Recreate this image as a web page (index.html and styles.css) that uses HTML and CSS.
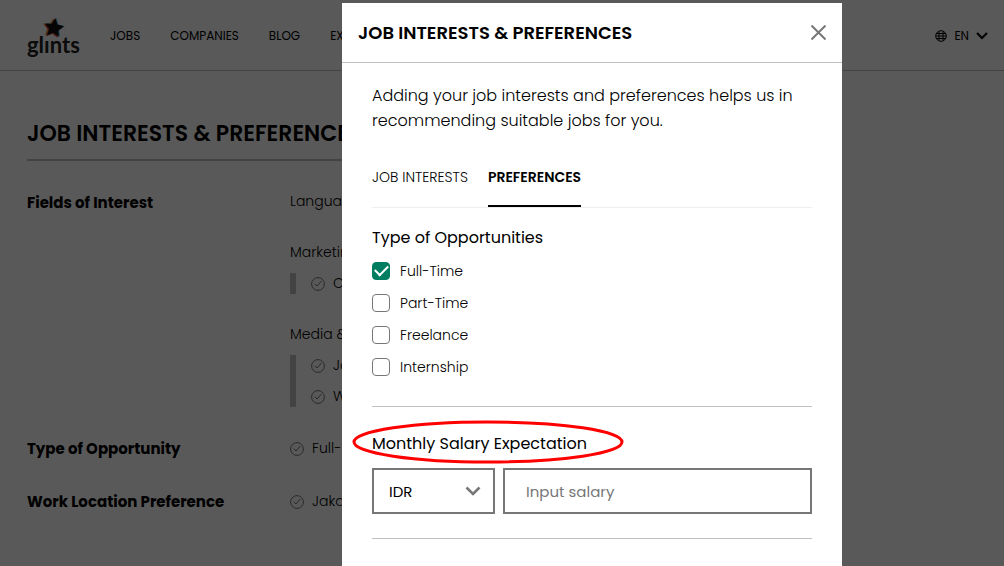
FILE: index.html
```html
<!DOCTYPE html>
<html lang="en">
  <head>
    <meta charset="UTF-8" />
    <meta name="viewport" content="width=device-width, initial-scale=1.0" />
    <title>Job Interests &amp; Preferences</title>
    <link rel="stylesheet" href="styles.css">
  </head>
  <body>
    <svg class="sprite" aria-hidden="true">
      <symbol id="check-circle" viewBox="0 0 14 14">
        <circle cx="7" cy="7" r="6.4" />
        <path d="M3.8 6.8 6 9 10.4 4" />
      </symbol>
      <path id="star" d="M0-10 2.8-3.9 9.5-3.1 4.6 1.5 5.9 8.1 0 4.8-5.9 8.1-4.6 1.5-9.5-3.1-2.8-3.9z" transform="rotate(8)" />
    </svg>

    <header class="header">
      <a class="logo" href="#" aria-label="glints">
        <svg width="53" height="42" viewBox="0 0 53 42">
          <use href="#star" x="25" y="13" fill="#e9a23b" />
          <use href="#star" x="28" y="13" fill="#28a9e0" />
          <use href="#star" x="26" y="14" fill="#d43a2f" />
          <use href="#star" x="27" y="13" fill="#111" />
          <text class="logo-text" x="0" y="38">glınts</text>
        </svg>
      </a>
      <nav class="nav">
        <a href="#">JOBS</a>
        <a href="#">COMPANIES</a>
        <a href="#">BLOG</a>
        <a href="#">EXP</a>
      </nav>
      <button class="language" type="button">
        <svg width="12" height="12" viewBox="0 0 12 12" fill="none" stroke="#000">
          <circle cx="6" cy="6" r="5.3" />
          <path d="M1 3.5h10M1 8.5h10M4 1.5v9M8 1.5v9M1 6h10" />
        </svg>
        EN
        <svg width="12" height="8" viewBox="0 0 12 8" fill="none" stroke="#000" stroke-width="2">
          <path d="M1 1l5 5 5-5" />
        </svg>
      </button>
    </header>

    <main class="profile">
      <h1>JOB INTERESTS &amp; PREFERENCES</h1>
      <section class="row">
        <h2>Fields of Interest</h2>
        <div class="groups">
          <div>Language</div>
          <div class="group">
            <div>Marketing</div>
            <ul>
              <li><svg class="check"><use href="#check-circle" /></svg>CRM</li>
            </ul>
          </div>
          <div class="group">
            <div>Media &amp; PR</div>
            <ul>
              <li><svg class="check"><use href="#check-circle" /></svg>Jour</li>
              <li><svg class="check"><use href="#check-circle" /></svg>Web</li>
            </ul>
          </div>
        </div>
      </section>
      <section class="row">
        <h2>Type of Opportunity</h2>
        <div class="value"><svg class="check"><use href="#check-circle" /></svg>Full-Time</div>
      </section>
      <section class="row">
        <h2>Work Location Preference</h2>
        <div class="value"><svg class="check"><use href="#check-circle" /></svg>Jakarta</div>
      </section>
    </main>

    <div class="overlay">
      <div class="modal" role="dialog" aria-labelledby="modal-title">
        <div class="modal-header">
          <h2 id="modal-title">JOB INTERESTS &amp; PREFERENCES</h2>
          <button class="close" type="button" aria-label="Close">
            <svg width="15" height="15" viewBox="0 0 15 15" fill="none" stroke="#777" stroke-width="2">
              <path d="M.5.5l14 14M14.5.5l-14 14" />
            </svg>
          </button>
        </div>
        <form class="modal-body">
          <p class="intro">Adding your job interests and preferences helps us in recommending suitable jobs for you.</p>
          <div class="tabs" role="tablist">
            <button type="button" role="tab" aria-selected="false">JOB INTERESTS</button>
            <button class="active" type="button" role="tab" aria-selected="true">PREFERENCES</button>
          </div>
          <fieldset class="opportunities">
            <legend>Type of Opportunities</legend>
            <label><input type="checkbox" checked />Full-Time</label>
            <label><input type="checkbox" />Part-Time</label>
            <label><input type="checkbox" />Freelance</label>
            <label><input type="checkbox" />Internship</label>
          </fieldset>
          <div class="salary">
            <label class="salary-label" for="salary">Monthly Salary Expectation
              <svg class="highlight" viewBox="0 0 272 44" aria-hidden="true">
                <ellipse cx="136" cy="22" rx="134" ry="20" />
              </svg>
            </label>
            <div class="salary-fields">
              <div class="select">
                <select aria-label="Currency">
                  <option>IDR</option>
                </select>
                <svg width="16" height="10" viewBox="0 0 16 10" fill="none" stroke="#777" stroke-width="2.6">
                  <path d="M1.5 1.5l6.5 6.5 6.5-6.5" />
                </svg>
              </div>
              <input id="salary" type="text" placeholder="Input salary" />
            </div>
          </div>
        </form>
      </div>
    </div>
  </body>
</html>
```

FILE: styles.css
```css
* {
  padding: 0;
  margin: 0;
  box-sizing: border-box;
}
body {
  height: 100vh;
  overflow: hidden;
  background: #fff;
  color: #000;
  font-family: Poppins, Inter, sans-serif;
  font-size: 14px;
  font-weight: 300;
  line-height: 21px;
}
a {
  color: inherit;
  text-decoration: none;
}
button {
  border: 0;
  background: none;
  color: inherit;
  font: inherit;
  cursor: pointer;
}
ul {
  list-style: none;
}
.sprite {
  position: absolute;
  width: 0;
  height: 0;
}

.header {
  display: flex;
  align-items: center;
  gap: 30px;
  height: 71px;
  padding: 1px 16px 0 27px;
  border-bottom: 1px solid #c0c0c0;
  font-size: 12px;
  font-weight: 400;
}
.logo {
  display: flex;
}
.logo-text {
  font: 700 22px Lato, sans-serif;
  fill: #222;
}
.nav {
  display: flex;
  gap: 30px;
}
.language {
  display: flex;
  align-items: center;
  gap: 7px;
  margin-left: auto;
}

.profile {
  max-width: 800px;
  padding: 48px 27px 0;
}
.profile h1 {
  margin-bottom: 30px;
  padding-bottom: 11px;
  border-bottom: 2px solid #c0c0c0;
  font-size: 22px;
  font-weight: 600;
  line-height: 29px;
}
.row {
  display: grid;
  grid-template-columns: 263px 1fr;
  margin-bottom: 30px;
}
.row h2 {
  font-size: 15px;
  line-height: 23px;
}
.groups {
  display: grid;
  gap: 30px;
}
.group ul {
  display: grid;
  gap: 10px;
  margin-top: 10px;
  padding-left: 15px;
  border-left: 6px solid #c0c0c0;
}
.group li,
.value {
  display: flex;
  align-items: center;
  gap: 8px;
}
.check {
  width: 14px;
  height: 14px;
  fill: none;
  stroke: #777;
}

.overlay {
  position: fixed;
  inset: 0;
  display: flex;
  justify-content: center;
  padding: 3px 0 0 180px;
  background: rgba(0, 0, 0, 0.65);
}
.modal {
  width: 500px;
  background: #fff;
}
.modal-header {
  display: flex;
  align-items: center;
  justify-content: space-between;
  padding: 16px;
  border-bottom: 1px solid #c0c0c0;
}
.modal-header h2 {
  font-size: 18px;
  font-weight: 600;
  line-height: 27px;
}
.close {
  display: flex;
}
.modal-body {
  padding: 20px 30px;
}
.intro {
  font-size: 16px;
  line-height: 25px;
}
.tabs {
  display: flex;
  gap: 20px;
  margin: 24px 0 18px;
  border-bottom: 1px solid #eee;
}
.tabs button {
  padding: 10px 0 17px;
  border-bottom: 2px solid transparent;
}
.tabs .active {
  border-color: #000;
  font-weight: 600;
}
.opportunities {
  padding-bottom: 28px;
  border: 0;
  border-bottom: 1px solid #c0c0c0;
}
.opportunities legend {
  margin-bottom: 10px;
  font-size: 16px;
  font-weight: 400;
  line-height: 24px;
}
.opportunities label {
  display: flex;
  align-items: center;
  gap: 10px;
  line-height: 22px;
}
.opportunities label + label {
  margin-top: 10px;
}
.opportunities input {
  width: 18px;
  height: 18px;
  border: 1px solid #777;
  border-radius: 4px;
  appearance: none;
}
.opportunities input:checked {
  display: grid;
  place-items: center;
  border-color: #017e61;
  background: #017e61;
}
.opportunities input:checked::before {
  content: "";
  width: 11px;
  height: 6px;
  margin-bottom: 4px;
  border: solid #fff;
  border-width: 0 0 2px 2px;
  transform: rotate(-45deg);
}

.salary {
  padding: 25px 0 24px;
  border-bottom: 1px solid #c0c0c0;
}
.salary-label {
  position: relative;
  display: block;
  width: fit-content;
  margin-bottom: 12px;
  font-size: 16px;
  font-weight: 400;
  line-height: 24px;
}
.highlight {
  position: absolute;
  top: -12px;
  left: -20px;
  width: 272px;
  height: 44px;
  fill: none;
  stroke: #f00;
  stroke-width: 3;
  pointer-events: none;
}
.salary-fields {
  display: flex;
  gap: 8px;
}
.select {
  display: grid;
  align-items: center;
  width: 123px;
}
.select select,
.select svg {
  grid-area: 1 / 1;
}
.select svg {
  justify-self: end;
  margin-right: 14px;
  pointer-events: none;
}
.select select,
.salary-fields input {
  width: 100%;
  height: 46px;
  border: 2px solid #777;
  border-radius: 0;
  background: #fff;
  color: #000;
  font: inherit;
  font-size: 15px;
  font-weight: 400;
  appearance: none;
}
.select select {
  padding: 0 15px;
}
.salary-fields input {
  flex: 1;
  padding: 0 21px;
}
.salary-fields input::placeholder {
  color: #777;
}
```
